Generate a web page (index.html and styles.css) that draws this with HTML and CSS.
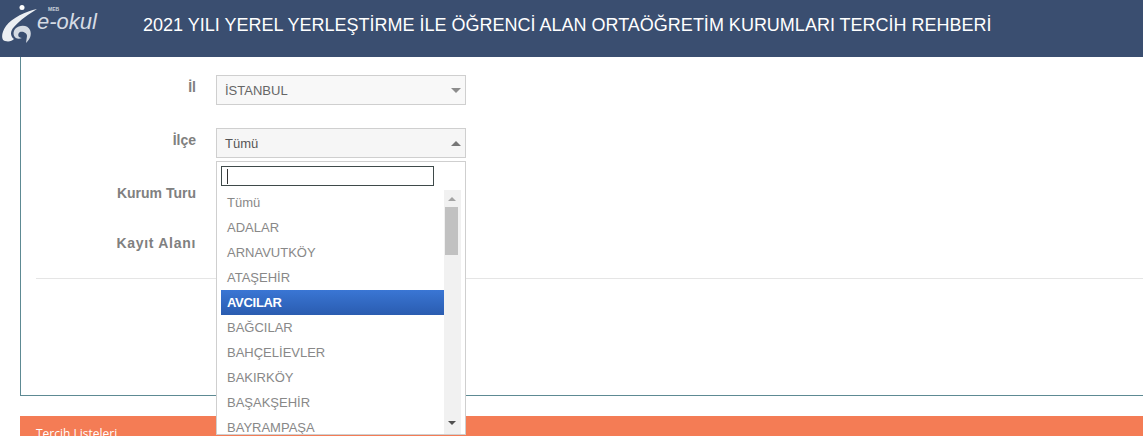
FILE: index.html
```html
<!DOCTYPE html>
<html lang="tr">
<head>
    <meta charset="UTF-8">
    <meta name="viewport" content="width=device-width, initial-scale=1.0">
    <title>Tercih Rehberi</title>
    <link rel="stylesheet" href="styles.css">
</head>
<body>
    <header class="top-bar">
        <div class="logo">
            <svg class="logo-mark" width="38" height="40" viewBox="0 0 38 40">
                <circle cx="20" cy="2.5" r="2.5" fill="#fff"/>
                <path d="M35 4C24 6 10 13 4 21C-1 28 -1 35 3 36C7 37 10 36 12 34C8 31 8 26 12 22C18 15 27 9 35 4Z" fill="#eceff3"/>
                <path d="M13 24C18 19 26 20 28 25C30 30 28 34 24 38L25 31C25 28 21 26 18 27C15 29 16 33 20 33C14 36 9 30 13 24Z" fill="#d5dbe3"/>
            </svg>
            <span class="logo-meb">MEB</span>
            <span class="logo-text">e-okul</span>
        </div>
        <h1>2021 YILI YEREL YERLEŞTİRME İLE ÖĞRENCİ ALAN ORTAÖĞRETİM KURUMLARI TERCİH REHBERİ</h1>
    </header>

    <main class="content">
        <section class="filter-panel">
            <div class="form-row">
                <label>İl</label>
                <div class="select-box">
                    <span class="select-value dark">İSTANBUL</span>
                    <span class="arrow-down"></span>
                </div>
            </div>
            <div class="form-row">
                <label>İlçe</label>
                <div class="select-box open">
                    <span class="select-value">Tümü</span>
                    <span class="arrow-up"></span>
                </div>
            </div>
            <div class="form-row">
                <label>Kurum Turu</label>
                <div class="select-box"></div>
            </div>
            <div class="form-row last">
                <label>Kayıt Alanı</label>
                <div class="select-box"></div>
            </div>
            <hr class="divider">
        </section>

        <section class="list-bar">Tercih Listeleri</section>
    </main>

    <div class="dropdown">
        <div class="search-wrap">
            <div class="search-input"><span class="caret"></span></div>
        </div>
        <div class="results">
            <ul class="options">
                <li>Tümü</li>
                <li>ADALAR</li>
                <li>ARNAVUTKÖY</li>
                <li>ATAŞEHİR</li>
                <li class="active">AVCILAR</li>
                <li>BAĞCILAR</li>
                <li>BAHÇELİEVLER</li>
                <li>BAKIRKÖY</li>
                <li>BAŞAKŞEHİR</li>
                <li>BAYRAMPAŞA</li>
            </ul>
            <div class="scrollbar">
                <span class="scroll-up"></span>
                <span class="scroll-thumb"></span>
                <span class="scroll-down"></span>
            </div>
        </div>
    </div>
</body>
</html>
```

FILE: styles.css
```css
html, body {
    height: 100%;
}
body {
    margin: 0;
    height: 436px;
    overflow: hidden;
    position: relative;
    background-color: #fff;
    font-family: "Liberation Sans", Arial, sans-serif;
}
.top-bar {
    height: 57px;
    background-color: #3a4e70;
    display: flex;
    align-items: center;
    position: relative;
}
.top-bar h1 {
    margin: 0 0 6px 143px;
    font-size: 18px;
    font-weight: normal;
    color: #fff;
    white-space: nowrap;
}
.logo {
    position: absolute;
    left: 2px;
    top: 3px;
    width: 100px;
    height: 44px;
}
.logo-mark {
    position: absolute;
    left: 0;
    top: 2px;
}
.logo-meb {
    position: absolute;
    left: 46px;
    top: 4px;
    font-size: 5px;
    line-height: 5px;
    font-weight: bold;
    color: #c9d0da;
}
.logo-text {
    position: absolute;
    left: 35px;
    top: 9px;
    font-size: 22px;
    line-height: 20px;
    font-style: italic;
    color: #d5dbe4;
}
.content {
    padding-left: 20px;
}
.filter-panel {
    height: 339px;
    box-sizing: border-box;
    padding-top: 18px;
    border-left: 1px solid #5d8a93;
    border-bottom: 1px solid #5d8a93;
}
.form-row {
    display: flex;
    gap: 20px;
    margin-bottom: 23px;
}
.form-row label {
    width: 175px;
    padding-top: 4px;
    text-align: right;
    font-size: 14px;
    font-weight: bold;
    color: #808080;
    white-space: nowrap;
}
.form-row:nth-child(3) {
    margin-bottom: 20px;
}
.form-row.last {
    margin-bottom: 0;
}
.form-row.last label {
    letter-spacing: 0.7px;
}
.select-box {
    width: 250px;
    height: 30px;
    box-sizing: border-box;
    border: 1px solid #cfcfcf;
    background-color: #f8f8f8;
    display: flex;
    align-items: center;
    justify-content: space-between;
    padding: 0 4px 0 8px;
}
.select-box.open {
    background-color: #f6f6f6;
}
.select-value {
    font-size: 13px;
    color: #555;
}
.select-value.dark {
    color: #666;
}
.arrow-down {
    border-left: 5px solid transparent;
    border-right: 5px solid transparent;
    border-top: 5px solid #8c8c8c;
}
.arrow-up {
    border-left: 5px solid transparent;
    border-right: 5px solid transparent;
    border-bottom: 5px solid #777;
}
.divider {
    margin: 17px 0 0 15px;
    border: 0;
    border-top: 1px solid #e5e5e5;
}
.list-bar {
    margin-top: 20px;
    height: 40px;
    padding: 9px 0 0 16px;
    box-sizing: border-box;
    background-color: #f47c55;
    color: #fff;
    font-family: "Open Sans", sans-serif;
    font-size: 12px;
}
.dropdown {
    position: absolute;
    left: 216px;
    top: 161px;
    width: 250px;
    height: 274px;
    box-sizing: border-box;
    border: 1px solid #cfcfcf;
    background-color: #fff;
    overflow: hidden;
}
.search-wrap {
    padding: 4px 0 0 4px;
}
.search-input {
    width: 206px;
    height: 18px;
    border: 1px solid #3f4a4a;
    display: flex;
    align-items: center;
    padding-left: 5px;
}
.caret {
    width: 1px;
    height: 15px;
    background-color: #333;
}
.results {
    display: flex;
    margin: 4px 0 0 4px;
}
.options {
    list-style: none;
    margin: 0;
    padding: 0;
    width: 223px;
}
.options li {
    height: 25px;
    line-height: 25px;
    padding-left: 6px;
    font-size: 13px;
    color: #888;
    white-space: nowrap;
}
.options li.active {
    background: linear-gradient(#3a76d4, #2a5cb0);
    color: #fff;
    font-weight: bold;
    letter-spacing: -0.3px;
}
.scrollbar {
    width: 17px;
    height: 244px;
    background-color: #f1f1f1;
    position: relative;
}
.scroll-thumb {
    position: absolute;
    left: 1px;
    top: 17px;
    width: 13px;
    height: 48px;
    background-color: #c1c1c1;
}
.scroll-up {
    position: absolute;
    left: 4px;
    top: 7px;
    border-left: 4px solid transparent;
    border-right: 4px solid transparent;
    border-bottom: 4px solid #a3a3a3;
}
.scroll-down {
    position: absolute;
    left: 4px;
    bottom: 9px;
    border-left: 4px solid transparent;
    border-right: 4px solid transparent;
    border-top: 4px solid #505050;
}
```
